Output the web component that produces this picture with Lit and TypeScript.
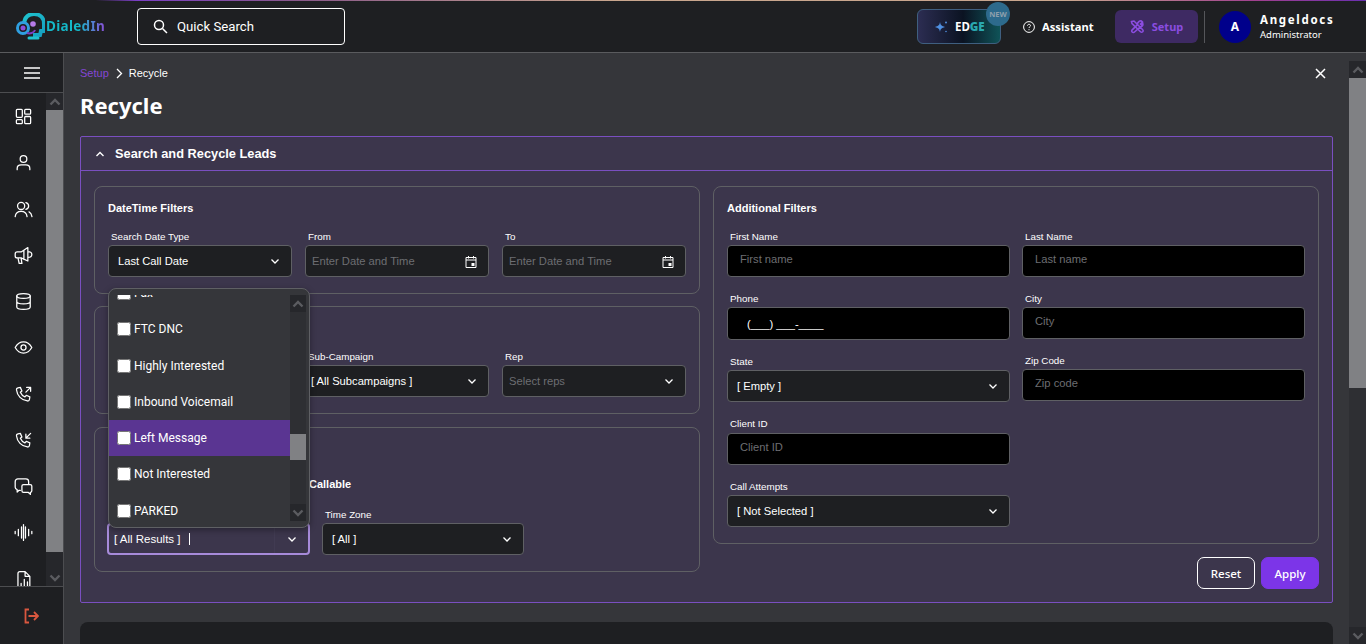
import { html, css, LitElement, svg } from 'lit';
import { customElement } from 'lit/decorators.js';

const chevronDown = html`<svg class="chev" viewBox="0 0 12 12"><path d="M2.5 4.5 6 8l3.5-3.5" /></svg>`;
const calendar = html`<svg class="cal" viewBox="0 0 12 13"><path d="M1 2.5h10v10H1zM1 5h10M3.5 1v2.5M8.5 1v2.5" /><rect x="6.5" y="8" width="3" height="3" /></svg>`;

const navIcons = [
    svg`<rect x="3" y="3" width="7.5" height="10" rx="1.2"/><rect x="13.5" y="3" width="7.5" height="6" rx="1.2"/><rect x="3" y="16" width="7.5" height="5" rx="1.2"/><rect x="13.5" y="12" width="7.5" height="9" rx="1.2"/>`,
    svg`<circle cx="12" cy="7.5" r="4.2"/><path d="M4 21v-1.5C4 16.5 6.5 15 9 15h6c2.500 0 5 1.500 5 4.500V21"/>`,
    svg`<circle cx="9" cy="7.500" r="4.500"/><path d="M1.500 21c.5-4 3-6.500 7.500-6.500s7 2.500 7.500 6.500M15 3.200c2.200.6 3.500 2.300 3.500 4.300s-1.300 3.700-3.500 4.300M19 15c2 1 3.200 3 3.700 6"/>`,
    svg`<path d="M1.500 10c0-1.500 1-2.500 2.500-2.500h5L17.500 2v17L9 15H4c-1.500 0-2.500-1-2.500-2.500zM17.500 7c3 0 5 1.800 5 3.800s-2 3.700-5 3.700M5 15l1.500 7h3.500L9 15.500M12.500 5.500v11.500"/>`,
    svg`<ellipse cx="12" cy="5" rx="8.500" ry="3"/><path d="M3.500 5v14c0 1.700 3.800 3 8.500 3s8.500-1.300 8.500-3V5M3.500 12c0 1.700 3.800 3 8.500 3s8.500-1.300 8.500-3"/>`,
    svg`<path d="M1.500 12S5.500 5 12 5s10.500 7 10.500 7-4 7-10.500 7S1.500 12 1.500 12z"/><circle cx="12" cy="12" r="3.200"/>`,
    svg`<path d="M5 3.500 8 3l2 4.500-2 1.700c1 2.300 3.300 4.800 5.800 5.800l1.700-2 4.500 2-.5 3.300c-.2 1.200-1.300 2-2.500 1.900C9.500 19.500 4 13.500 3.100 6c-.1-1.200.7-2.300 1.900-2.500zM15 9l6-6M16 3h5v5"/>`,
    svg`<path d="M5 3.500 8 3l2 4.500-2 1.700c1 2.300 3.300 4.800 5.800 5.800l1.700-2 4.500 2-.5 3.300c-.2 1.200-1.300 2-2.500 1.900C9.500 19.500 4 13.500 3.100 6c-.1-1.200.7-2.300 1.900-2.500zM21 3l-6 6M15 4v5h5"/>`,
    svg`<path d="M8 17H6l-2 2v-3c-1.500-.5-2.500-1.600-2.500-3V6c0-2 1.500-3.500 3.500-3.500h10C17 2.500 18.500 4 18.500 6v3"/><path d="M12 9.500h8.500c1 0 2 1 2 2v6c0 1-.8 1.800-1.800 2V22l-2.500-2.500H12c-1 0-2-1-2-2v-6c0-1 1-2 2-2z"/>`,
    svg`<path d="M1.500 10.500v3M5.500 8v8M9.500 5v14M12 2v20M14.500 5v14M18.500 8v8M22.500 10.500v3"/>`,
    svg`<path d="M5 22V4.500C5 3 6 2 7.500 2H14l6 6v14M14 2v6h6M9 22v-5M13 22V12M17 22v-7"/>`,
];

const options = ['Fax', 'FTC DNC', 'Highly Interested', 'Inbound Voicemail', 'Left Message', 'Not Interested', 'PARKED'];

@customElement('app-root')
export class AppRoot extends LitElement {
    static styles = css`
        :host {
            display: block;
            height: 100vh;
            overflow: hidden;
            background: #35363a;
            color: #fff;
            font-family: "Liberation Sans", Arial, sans-serif;
        }

        .topline {
            height: 1px;
            background: linear-gradient(90deg, #1e1f22 7%, #7b3fc4 10%, #8a5a8a 22%, #c9a68e 45%, #c9a68e 78%, #a0408f 92%, #6a2fb0);
        }

        header {
            height: 51px;
            box-sizing: content-box;
            border-bottom: 1px solid #5a5b5e;
            background: #1e1f22;
            display: flex;
            align-items: center;
            padding-left: 16px;
            position: relative;
        }

        .logo {
            width: 121px;
            display: flex;
            align-items: center;
            gap: 1px;
        }

        .logo svg {
            width: 29px;
            height: 28px;
            flex: none;
        }

        .logo span {
            font: 700 13.5px/1 "Noto Sans", sans-serif;
            letter-spacing: 0.3px;
            background: linear-gradient(90deg, #14b8c8 55%, #8b4fd8);
            -webkit-background-clip: text;
            background-clip: text;
            color: transparent;
        }

        .search {
            width: 208px;
            height: 37px;
            box-sizing: border-box;
            border: 1px solid #fff;
            border-radius: 4px;
            display: flex;
            align-items: center;
            gap: 9px;
            padding: 0 0 1px 15px;
            font: 400 13.2px Roboto, sans-serif;
        }

        .search svg {
            width: 15px;
            height: 15px;
            fill: none;
            stroke: #fff;
            stroke-width: 1.5;
        }

        .top-actions {
            margin-left: auto;
            display: flex;
            align-items: center;
            padding-right: 32px;
            font-family: "Noto Sans", sans-serif;
        }

        .edge {
            position: relative;
            width: 84px;
            height: 35px;
            box-sizing: border-box;
            border: 1px solid #3f5f80;
            border-radius: 6px;
            background: linear-gradient(90deg, #2c2d52, #0b1322 55%, #0f5358);
            display: flex;
            align-items: center;
            gap: 7px;
            padding-left: 16px;
            font-size: 11.5px;
            font-weight: 700;
        }

        .edge svg {
            width: 14px;
            height: 14px;
            fill: #4f8fe0;
        }

        .edge b {
            color: #2aa9b0;
        }

        .badge {
            position: absolute;
            top: -8px;
            right: -10px;
            width: 24px;
            height: 24px;
            border-radius: 50%;
            background: #2d6a8c;
            color: #8fa0ac;
            font-size: 7.5px;
            font-weight: 700;
            display: flex;
            align-items: center;
            justify-content: center;
        }

        .assistant {
            display: flex;
            align-items: center;
            gap: 7px;
            margin-left: 22px;
            width: 92px;
            font-size: 11.2px;
            font-weight: 700;
        }

        .assistant svg {
            width: 12px;
            height: 12px;
            fill: none;
            stroke: #fff;
        }

        .setup {
            width: 83px;
            height: 33px;
            border-radius: 6px;
            background: #3e2a63;
            color: #8b4de0;
            display: flex;
            align-items: center;
            justify-content: center;
            gap: 8px;
            font-size: 11px;
            font-weight: 700;
        }

        .setup svg {
            width: 14px;
            height: 14px;
            fill: none;
            stroke: #8b4de0;
            stroke-width: 1.600;
        }

        .divider {
            width: 1px;
            height: 32px;
            background: #55565a;
            margin: 0 14px 0 6px;
        }

        .avatar {
            width: 32px;
            height: 32px;
            border-radius: 50%;
            background: #00008b;
            display: flex;
            align-items: center;
            justify-content: center;
            font-size: 12px;
            font-weight: 700;
            margin-right: 9px;
        }

        .user {
            width: 74px;
            display: grid;
            gap: 2px;
        }

        .user strong {
            font-size: 11.5px;
            line-height: 14px;
            letter-spacing: 1.7px;
        }

        .user span {
            font-size: 9.5px;
            line-height: 12px;
        }

        .layout {
            display: flex;
            height: 591px;
        }

        aside {
            width: 63px;
            flex: none;
            border-right: 1px solid #4c4d50;
            background: #1e1f22;
            display: flex;
            flex-direction: column;
        }

        .burger {
            height: 39px;
            flex: none;
            border-bottom: 1px solid #4c4d50;
            display: flex;
            align-items: center;
            justify-content: center;
        }

        .burger svg {
            width: 16px;
            height: 12px;
            stroke: #fff;
            stroke-width: 1.500;
        }

        .nav-wrap {
            height: 493px;
            flex: none;
            display: flex;
            overflow: hidden;
        }

        nav {
            width: 46px;
            padding-top: 14px;
            display: grid;
            grid-auto-rows: 46.250px;
            justify-items: center;
            align-content: start;
        }

        nav svg {
            width: 19px;
            height: 19px;
            fill: none;
            stroke: #fff;
            stroke-width: 1.600;
            stroke-linecap: round;
            stroke-linejoin: round;
        }

        .sbar {
            background: #2e2f33;
            display: flex;
            flex-direction: column;
            flex: none;
        }

        .sbar .btn {
            height: 17px;
            flex: none;
            background: #26272b;
            display: flex;
            align-items: center;
            justify-content: center;
        }

        .sbar svg {
            width: 12px;
            height: 10px;
            fill: none;
            stroke: #5b5c60;
            stroke-width: 2.400;
        }

        .sbar .thumb {
            background: #808184;
            flex: none;
        }

        .sbar .rest {
            flex: 1;
        }

        .side-sbar {
            width: 17px;
        }

        .side-sbar .btn.end {
            height: 34px;
            align-items: flex-end;
            padding-bottom: 3px;
            box-sizing: border-box;
        }

        .logout {
            flex: 1;
            border-top: 1px solid #4c4d50;
            display: flex;
            align-items: center;
            justify-content: center;
            padding-right: 1px;
        }

        .logout svg {
            width: 16px;
            height: 16px;
            fill: none;
            stroke: #d9573f;
            stroke-width: 1.800;
        }

        main {
            flex: 1;
            min-width: 0;
            padding: 13px 16px 0;
            overflow: hidden;
        }

        .main-sbar {
            width: 17px;
            margin-top: 8px;
        }

        .crumbs {
            display: flex;
            align-items: center;
            gap: 6px;
            height: 14px;
            font-size: 11px;
        }

        .crumbs a {
            color: #8446d4;
        }

        .crumbs svg {
            width: 8px;
            height: 11px;
            fill: none;
            stroke: #fff;
            stroke-width: 1.300;
        }

        .crumbs .close {
            margin-left: auto;
            margin-right: 7px;
            width: 11px;
            height: 11px;
            stroke-width: 1.500;
        }

        h1 {
            margin: 9px 0 15px;
            font: 700 22px/32px "Noto Sans", sans-serif;
        }

        .panel {
            border: 1px solid #7a4fc0;
            border-radius: 2px;
            background: #3c364c;
        }

        .panel-head {
            height: 33px;
            border-bottom: 1px solid #7a4fc0;
            display: flex;
            align-items: center;
            gap: 10px;
            padding-left: 14px;
            font-size: 12.8px;
            font-weight: 700;
        }

        .panel-head svg {
            width: 10px;
            height: 10px;
            fill: none;
            stroke: #fff;
            stroke-width: 1.400;
        }

        .panel-body {
            display: grid;
            grid-template-columns: 606px 606px;
            gap: 13px;
            padding: 15px 13px 13px;
            align-items: start;
        }

        .stack {
            display: grid;
            gap: 12px;
        }

        .stack.left {
            position: relative;
        }

        .stack.right {
            gap: 13px;
        }

        .card {
            box-sizing: border-box;
            border: 1px solid #5f6064;
            border-radius: 8px;
            padding: 14px 13px 16px;
        }

        .card.results-filters {
            margin-top: 1px;
        }

        .card h3 {
            margin: 0 0 16px;
            min-height: 14px;
            font-size: 11px;
            line-height: 14px;
            font-weight: 700;
        }

        .three {
            display: grid;
            grid-template-columns: repeat(3, 184px);
            gap: 13px;
        }

        .two {
            display: grid;
            grid-template-columns: 283px 283px;
            gap: 12px;
        }

        .col {
            display: grid;
            gap: 16px;
            align-content: start;
        }

        label {
            display: block;
            height: 14px;
            line-height: 12px;
            padding-left: 3px;
            font-size: 9.8px;
        }

        label.tall {
            height: 15px;
        }

        .control {
            height: 32px;
            box-sizing: border-box;
            border: 1px solid #5f6064;
            border-radius: 4px;
            background: #1e1f22;
            display: flex;
            align-items: center;
            padding: 0 10px 0 9px;
            font-size: 11.2px;
        }

        .control.tight {
            padding-left: 5px;
        }

        .control.rep {
            padding-left: 6px;
        }

        .control .text {
            flex: 1;
        }

        .control .ph {
            color: #6d6e72;
            flex: 1;
        }

        .date {
            padding-left: 6px;
        }

        .chev {
            width: 12px;
            height: 12px;
            fill: none;
            stroke: #fff;
            stroke-width: 1.300;
            flex: none;
        }

        .cal {
            width: 12px;
            height: 13px;
            fill: none;
            stroke: #fff;
            flex: none;
            margin-right: 1px;
        }

        .cal rect {
            fill: #fff;
            stroke: none;
        }

        input.text-input {
            display: block;
            width: 100%;
            height: 32px;
            box-sizing: border-box;
            border: 1px solid #5f6064;
            border-radius: 4px;
            background: #000;
            color: #fff;
            outline: none;
            padding: 0 12px 4px;
            font: 11.2px "Liberation Sans", Arial, sans-serif;
        }

        input.text-input::placeholder {
            color: #6d6e72;
        }

        input.phone {
            height: 33px;
            padding: 1px 19px 0;
        }

        .callable {
            height: 14px;
            margin: 21px 0 18px;
            padding-left: 201px;
            font-size: 11px;
            line-height: 14px;
            font-weight: 700;
        }

        .results {
            display: flex;
            gap: 12px;
            align-items: end;
        }

        .results > div {
            width: 202px;
        }

        .focused {
            background: #3c364c;
            border: 2px solid #a78bda;
            padding: 0 10px 0 5px;
            margin-left: -1px;
            width: 203px;
            font-size: 11.5px;
        }

        .focused .chip {
            padding-right: 9px;
        }

        .focused .caret {
            width: 1px;
            height: 12px;
            background: #fff;
            flex: none;
        }

        .focused .sep {
            flex: 1;
            align-self: stretch;
            border-right: 1px solid #413b52;
            margin-right: 11px;
        }

        .dropdown {
            position: absolute;
            left: 14px;
            top: 102px;
            width: 202px;
            height: 240px;
            box-sizing: border-box;
            border: 1px solid #5f6064;
            border-radius: 8px;
            background: #35363a;
            padding: 6px 3px 6px 0;
            display: flex;
            box-shadow: 0 2px 6px rgba(0, 0, 0, 0.35);
        }

        .list {
            flex: 1;
            overflow: hidden;
        }

        .option {
            height: 36.250px;
            display: flex;
            align-items: center;
            gap: 3px;
            padding-left: 8px;
            font: 12px Roboto, sans-serif;
        }

        .option:first-child {
            margin-top: -20px;
        }

        .option.active {
            background: #5a3592;
        }

        .option input {
            width: 14px;
            height: 14px;
            margin: 0;
            flex: none;
        }

        .drop-sbar {
            width: 16px;
        }

        .buttons {
            display: flex;
            justify-content: flex-end;
            gap: 6px;
        }

        button {
            width: 58px;
            height: 32px;
            border-radius: 7px;
            border: 1px solid #fff;
            background: transparent;
            color: #fff;
            font: 500 11.5px "Noto Sans", sans-serif;
        }

        button.primary {
            border-color: #7c35e8;
            background: #7c35e8;
        }

        .results-card {
            margin-top: 19px;
            height: 60px;
            border-radius: 8px;
            background: #1e1f22;
        }
    `;

    private field(name: string, control: unknown, labelClass = '') {
        return html`<div><label class=${labelClass}>${name}</label>${control}</div>`;
    }

    private select(value: string, cls = '') {
        return html`<div class="control ${cls}"><span class="text">${value}</span>${chevronDown}</div>`;
    }

    private dateInput() {
        return html`<div class="control date"><span class="ph">Enter Date and Time</span>${calendar}</div>`;
    }

    private input(placeholder: string) {
        return html`<input class="text-input" placeholder=${placeholder} />`;
    }

    private scrollbar(cls: string, before: number, size: number, endCls = '') {
        return html`
            <div class="sbar ${cls}">
                <div class="btn"><svg viewBox="0 0 12 10"><path d="M1.500 7.500 6 3l4.500 4.500" /></svg></div>
                <div style="height:${before}px;flex:none"></div>
                <div class="thumb" style="height:${size}px"></div>
                <div class="rest"></div>
                <div class="btn ${endCls}"><svg viewBox="0 0 12 10"><path d="M1.500 2.500 6 7l4.500-4.500" /></svg></div>
            </div>
        `;
    }

    private renderHeader() {
        return html`
            <div class="topline"></div>
            <header>
                <div class="logo">
                    <svg viewBox="0 0 29 28">
                        <defs>
                            <linearGradient id="lg" x1="0" y1="0" x2="1" y2="1">
                                <stop offset="0" stop-color="#1fc4cf" />
                                <stop offset="1" stop-color="#159fc0" />
                            </linearGradient>
                        </defs>
                        <path d="M8 10c1-6 5-9 10-9 6 0 10 4 10 10v7h-3l-1 4h-7" fill="none" stroke="url(#lg)" stroke-width="4" />
                        <path d="M13 25h9" stroke="#1fc4cf" stroke-width="3" stroke-linecap="round" />
                        <circle cx="7" cy="15" r="5.500" fill="none" stroke="#2f9fe0" stroke-width="3" />
                        <circle cx="7" cy="15" r="2.500" fill="#8b4fd8" />
                        <circle cx="17" cy="11" r="2.800" fill="#b57be8" />
                        <path d="M11 20c3 1 7 0 8-3" fill="none" stroke="#7b3fc4" stroke-width="2" />
                    </svg>
                    <span>DialedIn</span>
                </div>
                <div class="search">
                    <svg viewBox="0 0 15 15"><circle cx="6" cy="6" r="4.500" /><path d="m9.500 9.500 4.500 4.500" /></svg>
                    Quick Search
                </div>
                <div class="top-actions">
                    <div class="edge">
                        <svg viewBox="0 0 14 14"><path d="M6 2c.5 3 1.500 4 5 5-3.500 1-4.500 2-5 5-.5-3-1.500-4-5-5 3.500-1 4.500-2 5-5z" /><circle cx="12" cy="2.500" r="1" /><circle cx="12" cy="11.500" r="0.800" /></svg>
                        <span>ED<b>GE</b></span>
                        <div class="badge">NEW</div>
                    </div>
                    <div class="assistant">
                        <svg viewBox="0 0 12 12"><circle cx="6" cy="6" r="5.400" /><path d="M4.500 4.700C4.500 3.800 5.200 3.300 6 3.300s1.500.5 1.500 1.300C7.500 5.700 6 5.700 6 7M6 8.200v1" /></svg>
                        Assistant
                    </div>
                    <div class="setup">
                        <svg viewBox="0 0 14 14"><path d="M1.500 1.500 4 1l8.500 8.500c.8.8.8 1.500.2 2.200-.7.700-1.500.7-2.200 0L2 3.500zM9 1.500c1-.8 2.500-.6 3.500.5l-2 2 1 1 1.300-1.300c.4 1.400-.6 3-2.300 3L4.500 12c-.8.800-1.800.5-2.300 0-.5-.6-.6-1.500 0-2.200L7 5.200C7 4 7.800 2.400 9 1.500z" /></svg>
                        Setup
                    </div>
                    <div class="divider"></div>
                    <div class="avatar">A</div>
                    <div class="user"><strong>Angeldocs</strong><span>Administrator</span></div>
                </div>
            </header>
        `;
    }

    private renderSidebar() {
        return html`
            <aside>
                <div class="burger"><svg viewBox="0 0 16 12"><path d="M0 1h16M0 6h16M0 11h16" /></svg></div>
                <div class="nav-wrap">
                    <nav>${navIcons.map((icon) => html`<svg viewBox="0 0 24 24">${icon}</svg>`)}</nav>
                    ${this.scrollbar('side-sbar', 0, 442, 'end')}
                </div>
                <div class="logout">
                    <svg viewBox="0 0 16 16"><path d="M6 1.500H2.500v13H6M5.500 8H15M11 4l4 4-4 4" /></svg>
                </div>
            </aside>
        `;
    }

    private renderDropdown() {
        return html`
            <div class="dropdown">
                <div class="list">
                    ${options.map((o) => html`
                        <div class="option ${o === 'Left Message' ? 'active' : ''}">
                            <input type="checkbox" />${o}
                        </div>
                    `)}
                </div>
                ${this.scrollbar('drop-sbar', 122, 26)}
            </div>
        `;
    }

    private renderLeft() {
        return html`
            <div class="stack left">
                <section class="card">
                    <h3>DateTime Filters</h3>
                    <div class="three">
                        ${this.field('Search Date Type', this.select('Last Call Date'))}
                        ${this.field('From', this.dateInput())}
                        ${this.field('To', this.dateInput())}
                    </div>
                </section>
                <section class="card">
                    <h3></h3>
                    <div class="three">
                        ${this.field('', this.select(''))}
                        ${this.field('Sub-Campaign', this.select('[ All Subcampaigns ]', 'tight'))}
                        <div><label>Rep</label><div class="control rep"><span class="ph">Select reps</span>${chevronDown}</div></div>
                    </div>
                </section>
                <section class="card results-filters">
                    <h3></h3>
                    <div class="callable">Callable</div>
                    <div class="results">
                        <div>
                            <label></label>
                            <div class="control focused">
                                <span class="chip">[ All Results ]</span>
                                <span class="caret"></span>
                                <span class="sep"></span>
                                ${chevronDown}
                            </div>
                        </div>
                        ${this.field('Time Zone', this.select('[ All ]'))}
                    </div>
                </section>
                ${this.renderDropdown()}
            </div>
        `;
    }

    private renderRight() {
        return html`
            <div class="stack right">
                <section class="card">
                    <h3>Additional Filters</h3>
                    <div class="two">
                        <div class="col">
                            ${this.field('First Name', this.input('First name'))}
                            ${this.field('Phone', html`<input class="text-input phone" value="(___) ___-____" />`)}
                            ${this.field('State', this.select('[ Empty ]'))}
                            ${this.field('Client ID', this.input('Client ID'), 'tall')}
                            ${this.field('Call Attempts', this.select('[ Not Selected ]'))}
                        </div>
                        <div class="col">
                            ${this.field('Last Name', this.input('Last name'))}
                            ${this.field('City', this.input('City'))}
                            ${this.field('Zip Code', this.input('Zip code'))}
                        </div>
                    </div>
                </section>
                <div class="buttons">
                    <button>Reset</button>
                    <button class="primary">Apply</button>
                </div>
            </div>
        `;
    }

    render() {
        return html`
            ${this.renderHeader()}
            <div class="layout">
                ${this.renderSidebar()}
                <main>
                    <div class="crumbs">
                        <a>Setup</a>
                        <svg viewBox="0 0 8 11"><path d="m2 1 4.500 4.500L2 10" /></svg>
                        <span>Recycle</span>
                        <svg class="close" viewBox="0 0 11 11"><path d="m1 1 9 9M10 1l-9 9" /></svg>
                    </div>
                    <h1>Recycle</h1>
                    <div class="panel">
                        <div class="panel-head">
                            <svg viewBox="0 0 10 10"><path d="M1.500 7 5 3.500 8.500 7" /></svg>
                            Search and Recycle Leads
                        </div>
                        <div class="panel-body">
                            ${this.renderLeft()}
                            ${this.renderRight()}
                        </div>
                    </div>
                    <div class="results-card"></div>
                </main>
                ${this.scrollbar('main-sbar', 0, 310)}
            </div>
        `;
    }
}

declare global {
    interface HTMLElementTagNameMap {
        'app-root': AppRoot;
    }
}
